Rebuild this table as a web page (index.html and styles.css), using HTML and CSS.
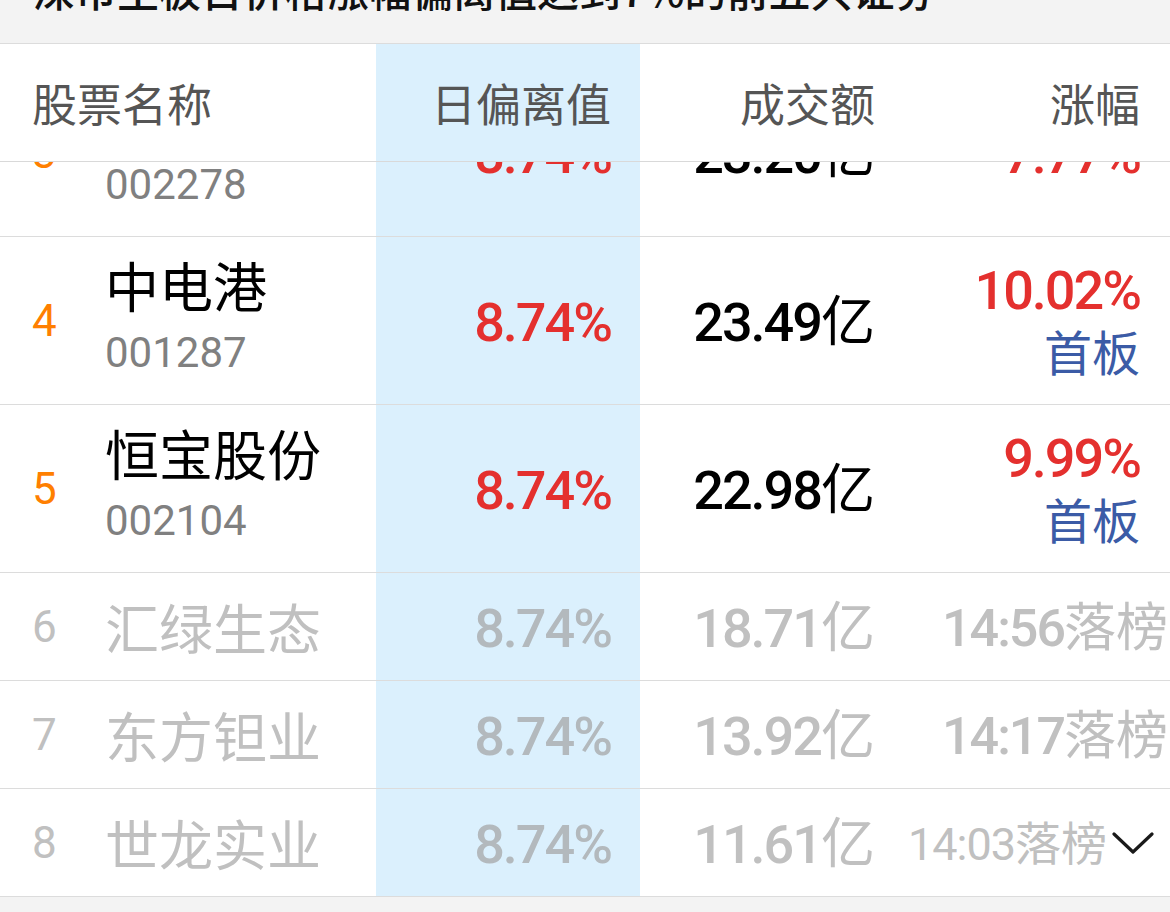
FILE: index.html
```html
<!DOCTYPE html>
<html lang="zh-CN">
<head>
<meta charset="utf-8">
<title>日偏离值榜</title>
<link rel="stylesheet" href="styles.css">
</head>
<body>
<div class="screen">
  <div class="topbar"><p class="title">深市主板日价格涨幅偏离值达到7%的前五只证券</p></div>
  <div class="table">
    <div class="thead">
      <div class="cell c-name">股票名称</div>
      <div class="cell c-dev">日偏离值</div>
      <div class="cell c-amt">成交额</div>
      <div class="cell c-chg">涨幅</div>
    </div>
    <div class="viewport">
      <div class="list">
        <div class="row tall">
          <div class="cell c-name"><span class="rank hot">3</span><div class="stock"><span class="name">神开股份</span><span class="code">002278</span></div></div>
          <div class="cell c-dev"><span class="val"><span class="num red">8.74%</span></span></div>
          <div class="cell c-amt"><span class="val"><span class="num">23.20</span>亿</span></div>
          <div class="cell c-chg"><span class="val"><span class="num red">7.77%</span></span></div>
        </div>
        <div class="row tall">
          <div class="cell c-name"><span class="rank hot">4</span><div class="stock"><span class="name">中电港</span><span class="code">001287</span></div></div>
          <div class="cell c-dev"><span class="val"><span class="num red">8.74%</span></span></div>
          <div class="cell c-amt"><span class="val"><span class="num">23.49</span>亿</span></div>
          <div class="cell c-chg"><div class="stack"><span class="num red">10.02%</span><span class="tag">首板</span></div></div>
        </div>
        <div class="row tall">
          <div class="cell c-name"><span class="rank hot">5</span><div class="stock"><span class="name">恒宝股份</span><span class="code">002104</span></div></div>
          <div class="cell c-dev"><span class="val"><span class="num red">8.74%</span></span></div>
          <div class="cell c-amt"><span class="val"><span class="num">22.98</span>亿</span></div>
          <div class="cell c-chg"><div class="stack"><span class="num red">9.99%</span><span class="tag">首板</span></div></div>
        </div>
        <div class="row short dim">
          <div class="cell c-name"><span class="rank">6</span><span class="name">汇绿生态</span></div>
          <div class="cell c-dev"><span class="val"><span class="num">8.74%</span></span></div>
          <div class="cell c-amt"><span class="val"><span class="num">18.71</span>亿</span></div>
          <div class="cell c-chg drop"><span class="val"><span class="num">14:56</span>落榜</span></div>
        </div>
        <div class="row short dim">
          <div class="cell c-name"><span class="rank">7</span><span class="name">东方钽业</span></div>
          <div class="cell c-dev"><span class="val"><span class="num">8.74%</span></span></div>
          <div class="cell c-amt"><span class="val"><span class="num">13.92</span>亿</span></div>
          <div class="cell c-chg drop"><span class="val"><span class="num">14:17</span>落榜</span></div>
        </div>
        <div class="row short dim">
          <div class="cell c-name"><span class="rank">8</span><span class="name">世龙实业</span></div>
          <div class="cell c-dev"><span class="val"><span class="num">8.74%</span></span></div>
          <div class="cell c-amt"><span class="val"><span class="num">11.61</span>亿</span></div>
          <div class="cell c-chg drop more"><span class="val"><span class="num">14:03</span>落榜</span><svg class="chev" viewBox="0 0 42 22" width="42" height="22"><polyline points="2,2 21,20 40,2" fill="none" stroke="#1a1a1a" stroke-width="3.2" stroke-linecap="round" stroke-linejoin="round"/></svg></div>
        </div>
      </div>
    </div>
  </div>
</div>
</body>
</html>
```

FILE: styles.css
```css
* { box-sizing: border-box; }

body {
  margin: 0;
  background: #f3f3f3;
  font-family: "Noto Sans CJK SC", "Noto Sans", sans-serif;
}

.screen {
  width: 1170px;
  height: 912px;
  overflow: hidden;
  background: #f3f3f3;
}

.topbar {
  height: 44px;
  border-bottom: 1px solid #dcdcdc;
  overflow: hidden;
  padding-left: 33px;
}

.title {
  margin: -32px 0 0;
  font-size: 42px;
  line-height: 42px;
  font-weight: 500;
  color: #111;
  white-space: nowrap;
}

.table { background: #fff; }

.thead,
.row {
  display: grid;
  grid-template-columns: 376px 264px 265px 265px;
}

.thead {
  height: 118px;
  border-bottom: 1px solid #d9d9d9;
}

.thead .cell {
  font-size: 45px;
  color: #555;
}

.cell {
  display: flex;
  align-items: center;
  justify-content: flex-end;
  padding-right: 30px;
  white-space: nowrap;
}

.c-name {
  justify-content: flex-start;
  padding-left: 32px;
  padding-right: 0;
}

.c-dev {
  background: #dbf0fd;
  padding-right: 29px;
}

.viewport {
  height: 735px;
  overflow: hidden;
}

.list { margin-top: -93px; }

.row { border-bottom: 1px solid #dcdcdc; }
.row.tall { height: 168px; }
.row.short { height: 108px; }

.rank {
  flex: none;
  width: 73px;
  font-family: Roboto, sans-serif;
  font-size: 44px;
  line-height: 1;
}

.hot { color: #ff7f00; }

.stock {
  display: flex;
  flex-direction: column;
  margin-bottom: 11px;
}

.name {
  font-size: 54px;
  line-height: 62px;
  color: #000;
}

.code {
  font-family: Roboto, sans-serif;
  font-size: 42px;
  line-height: 48px;
  color: #808080;
  margin-top: 13px;
}

.val {
  font-size: 54px;
  line-height: 64px;
  color: #000;
}

.num {
  font-family: Roboto, sans-serif;
  font-weight: 500;
  font-size: 54px;
  letter-spacing: -2px;
}

.red { color: #e4302e; }

.stack {
  display: flex;
  flex-direction: column;
  align-items: flex-end;
}

.stack .num { line-height: 58px; }

.tag {
  font-size: 48px;
  line-height: 60px;
  color: #3b5ba6;
}

.dim .rank,
.dim .name,
.dim .val { color: #c0c0c0; }

.dim .c-dev .val { color: #b3b9bd; }

.drop { padding-right: 2px; }
.drop .val { font-size: 52px; }
.drop .num { font-size: 52px; }

.drop.more { padding-right: 16px; }
.drop.more .val { font-size: 46px; }
.drop.more .num { font-size: 45px; font-weight: 400; letter-spacing: -1px; }

.chev {
  flex: none;
  margin-left: 5px;
}
```
